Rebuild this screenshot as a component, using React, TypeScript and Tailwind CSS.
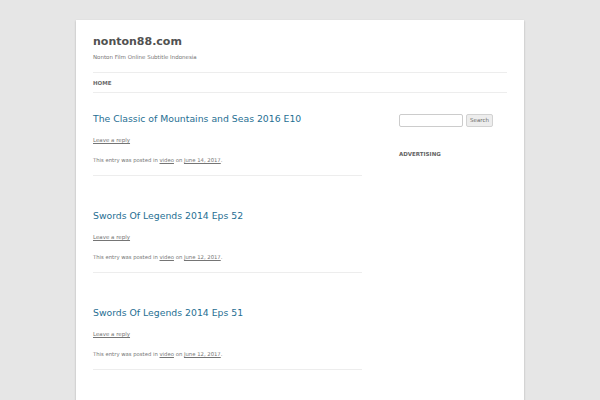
const posts = [
  { title: "The Classic of Mountains and Seas 2016 E10", date: "June 14, 2017" },
  { title: "Swords Of Legends 2014 Eps 52", date: "June 12, 2017" },
  { title: "Swords Of Legends 2014 Eps 51", date: "June 12, 2017" },
];

export default function App() {
  return (
    <div
      className="min-h-[400px] bg-[#e6e6e6] pt-[20px]"
      style={{ fontFamily: '"DejaVu Sans", sans-serif' }}
    >
      <div className="mx-auto w-[448px] h-[380px] overflow-hidden bg-white px-[17px] shadow-[0_1px_2px_rgba(0,0,0,0.25)]">
        <header className="pt-[14px]">
          <h1 className="text-[11px] font-bold leading-[16px] text-[#515151]">nonton88.com</h1>
          <p className="mt-[3px] text-[5.5px] leading-[8px] text-[#757575]">
            Nonton Film Online Subtitle Indonesia
          </p>
          <nav className="mt-[11px] flex h-[21px] items-center border-y border-[#ededed] text-[5.5px] leading-[6px]">
            <span className="font-bold text-[#6a6a6a]">HOME</span>
          </nav>
        </header>
        <div className="flex gap-[37px]">
          <main className="w-[269px]">
            {posts.map((p) => (
              <article key={p.title} className="mb-[14px] border-b border-[#ededed] pt-[19px] pb-[11px]">
                <h2 className="text-[9.3px] leading-[14px] text-[#1f6f93]">{p.title}</h2>
                <p className="mt-[10px] text-[5.5px] leading-[8px] text-[#757575] underline">
                  Leave a reply
                </p>
                <p className="mt-[12px] text-[5.3px] leading-[8px] text-[#757575]">
                  This entry was posted in <span className="underline">video</span> on{" "}
                  <span className="underline">{p.date}</span>.
                </p>
              </article>
            ))}
          </main>
          <aside className="pt-[21px]">
            <div className="flex items-center gap-[3px]">
              <div className="h-[13px] w-[64px] rounded-[2px] border border-[#ccc] bg-white" />
              <div className="flex h-[13px] w-[27px] items-center justify-center rounded-[2px] border border-[#d2d2d2] bg-[#ededed] text-[5.5px] text-[#6a6a6a]">
                Search
              </div>
            </div>
            <h3 className="mt-[24px] text-[5.5px] font-bold leading-[6px] text-[#636363]">
              ADVERTISING
            </h3>
          </aside>
        </div>
      </div>
    </div>
  );
}
